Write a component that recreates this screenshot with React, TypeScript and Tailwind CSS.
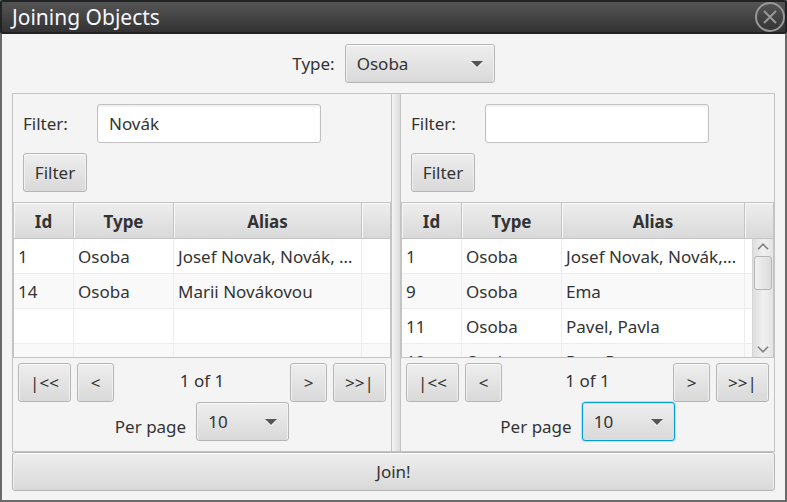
import { useId } from "react";
import type { ReactNode } from "react";

const fill = "rounded-[3px] border bg-linear-to-b from-[#eeeeee] to-[#d9d9d9]";
const idle =
  "border-[#b5b5b5] shadow-[inset_0_1px_0_#fbfbfb,inset_1px_0_0_#f0f0f0,inset_-1px_0_0_#f0f0f0]";
const active = "border-[#039ed3] shadow-[0_0_0_1px_#b9e1f0,inset_0_0_0_1px_#c6e4ef]";

function Button({ children, className = "", label }: { children: ReactNode; className?: string; label?: string }) {
  return (
    <button type="button" aria-label={label} className={`${fill} ${idle} h-[39px] text-center ${className}`}>
      {children}
    </button>
  );
}

function Dropdown({ id, value, className, focused = false }: { id: string; value: string; className: string; focused?: boolean }) {
  return (
    <div className={`relative ${className}`}>
      <select
        id={id}
        defaultValue={value}
        className={`${fill} ${focused ? active : idle} h-[39px] w-full appearance-none pl-[11px] pr-8 outline-none`}
      >
        <option>{value}</option>
      </select>
      <svg className="pointer-events-none absolute top-4 right-3 h-[8px] w-3" viewBox="0 0 12 8" aria-hidden="true">
        <path d="M0 2h12L6 8z" fill="#fff" />
        <path d="M0 1h12L6 7z" fill="#555" />
      </svg>
    </div>
  );
}

type Row = [string, string, string];

function ScrollBar() {
  return (
    <div className="absolute top-9 right-0 bottom-0 flex w-[21px] flex-col items-center justify-between border-l border-[#d6d6d6] bg-linear-to-r from-[#dedede] via-[#f0f0f0] to-[#e4e4e4] py-1">
      <div className="flex flex-col items-center gap-[6px]">
        <svg className="h-[7px] w-3" viewBox="0 0 12 7" fill="none" stroke="#808080" strokeWidth="1.6" aria-hidden="true">
          <path d="M1 6.2 6 1.2l5 5" />
        </svg>
        <div className="h-[34px] w-[18px] rounded-[3px] border border-[#b5b5b5] bg-linear-to-r from-[#f1f1f1] to-[#dcdcdc]" />
      </div>
      <svg className="h-[7px] w-3" viewBox="0 0 12 7" fill="none" stroke="#808080" strokeWidth="1.6" aria-hidden="true">
        <path d="m1 .8 5 5 5-5" />
      </svg>
    </div>
  );
}

function DataTable({ rows, scroll = false }: { rows: Row[]; scroll?: boolean }) {
  const cell = "h-[35px] truncate border-r border-b border-[#ededed] px-1 pt-[2px] pb-0 leading-8";
  const head =
    "h-9 border-r border-b border-[#c4c4c4] bg-linear-to-b from-[#eeeeee] to-[#d9d9d9] px-0 pt-[2px] pb-0 font-bold shadow-[inset_1px_1px_0_#f8f8f8]";
  return (
    <div className="relative h-[156px] overflow-hidden border border-[#c4c4c4] bg-white">
      <table className="w-full table-fixed border-separate border-spacing-0">
        <colgroup>
          <col className="w-[60px]" />
          <col className="w-[100px]" />
          <col />
          <col className="w-7" />
        </colgroup>
        <thead>
          <tr>
            <th className={head}>Id</th>
            <th className={head}>Type</th>
            <th className={head}>Alias</th>
            <th className={`${head} border-r-0`} />
          </tr>
        </thead>
        <tbody>
          {rows.map((row, i) => (
            <tr key={i} className="even:bg-[#f9f9f9]">
              <td className={cell}>{row[0]}</td>
              <td className={cell}>{row[1]}</td>
              <td className={cell}>{row[2]}</td>
              <td className={`${cell} border-r-0`} />
            </tr>
          ))}
        </tbody>
      </table>
      {scroll && <ScrollBar />}
    </div>
  );
}

function Pane({ filter, rows, scroll, focused }: { filter: string; rows: Row[]; scroll?: boolean; focused?: boolean }) {
  const id = useId();
  return (
    <section className="min-w-0 border border-[#c4c4c4] pb-[10px]">
      <div className="flex flex-col items-start gap-[10px] p-[10px]">
        <div className="flex items-center">
          <label htmlFor={`${id}-filter`} className="w-[74px]">
            Filter:
          </label>
          <input
            id={`${id}-filter`}
            type="text"
            defaultValue={filter}
            className="h-[39px] w-56 rounded-[3px] border border-[#c0c0c0] bg-white px-[11px] shadow-[inset_0_2px_2px_#f0f0f0] outline-none"
          />
        </div>
        <Button className="w-16">Filter</Button>
      </div>
      <DataTable rows={rows} scroll={scroll} />
      <div className="flex gap-[6px] px-[5px] pt-[5px]">
        <Button className="w-[53px]" label="First page">|&lt;&lt;</Button>
        <Button className="w-[37px]" label="Previous page">&lt;</Button>
        <span className="flex-1 text-center leading-[35px]">1 of 1</span>
        <Button className="w-[37px]" label="Next page">&gt;</Button>
        <Button className="w-[53px]" label="Last page">&gt;&gt;|</Button>
      </div>
      <div className="flex h-[39px] justify-center gap-[10px]">
        <label htmlFor={`${id}-size`} className="pt-[13px]">
          Per page
        </label>
        <Dropdown id={`${id}-size`} value="10" className="w-[93px]" focused={focused} />
      </div>
    </section>
  );
}

const left: Row[] = [
  ["1", "Osoba", "Josef Novak, Novák, Nováka"],
  ["14", "Osoba", "Marii Novákovou"],
  ["", "", ""],
  ["", "", ""],
];

const right: Row[] = [
  ["1", "Osoba", "Josef Novak, Novák, Nováka"],
  ["9", "Osoba", "Ema"],
  ["11", "Osoba", "Pavel, Pavla"],
  ["12", "Osoba", "Petr, Petra"],
];

export default function App() {
  return (
    <div className="min-h-screen border-x-2 border-b-2 border-[#6a6a6a] bg-[#f4f4f4] font-['Noto_Sans','Open_Sans',sans-serif] text-[17px] leading-6 text-[#333]">
      <header className="-mx-[2px] flex h-[34px] items-center justify-between rounded-[3px] border-2 border-[#202224] bg-linear-to-b from-[#555] to-[#333] pl-[10px]">
        <h1 className="text-[21px] leading-7 text-[#f5f8ff]">Joining Objects</h1>
        <button type="button" aria-label="Close">
          <svg className="size-[30px]" viewBox="0 0 30 30" fill="none" stroke="#989898" strokeWidth="2" aria-hidden="true">
            <circle cx="15" cy="15" r="14" />
            <path d="m9 9 12 12M21 9 9 21" />
          </svg>
        </button>
      </header>
      <main className="px-[10px] pt-[10px] pb-[9px]">
        <div className="mb-[10px] flex items-center justify-center gap-[10px]">
          <label htmlFor="object-type">Type:</label>
          <Dropdown id="object-type" value="Osoba" className="w-[150px]" />
        </div>
        <div className="grid grid-cols-[380fr_8px_375fr]">
          <Pane filter="Novák" rows={left} />
          <div className="border-y border-[#c4c4c4] bg-linear-to-r from-[#f4f4f4] to-[#dcdcdc]" />
          <Pane filter="" rows={right} scroll focused />
        </div>
        <Button className="w-full">Join!</Button>
      </main>
    </div>
  );
}
